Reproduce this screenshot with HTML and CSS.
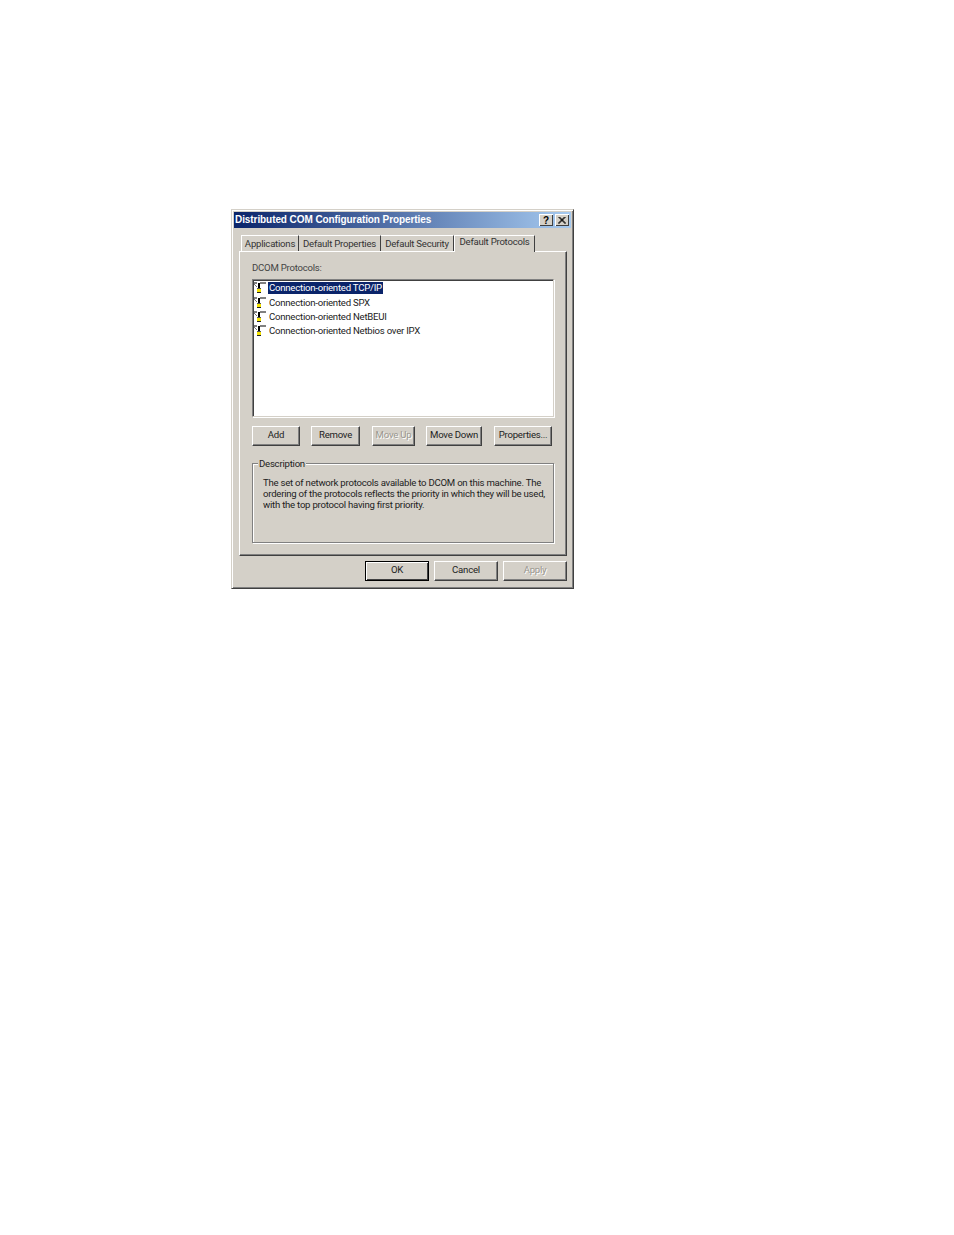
FILE: index.html
```html
<!DOCTYPE html>
<html lang="en">
<head>
    <meta charset="UTF-8">
    <title>Distributed COM Configuration Properties</title>
    <link rel="stylesheet" href="styles.css">
</head>
<body>
    <svg class="defs" width="0" height="0">
        <symbol id="proto" viewBox="0 0 14 12">
            <path d="M1 1h3M7 1h6" stroke="#000" fill="none"/>
            <path d="M1 2l3 3" stroke="#777" fill="none"/>
            <rect x="5" y="1" width="2" height="5" fill="#000"/>
            <rect x="4" y="6" width="4" height="1" fill="#555"/>
            <rect x="4" y="7" width="4" height="3" fill="#f5e400"/>
            <rect x="4" y="10" width="4" height="1" fill="#222"/>
        </symbol>
    </svg>
    <div class="dialog">
        <div class="titlebar">
            <span class="title">Distributed COM Configuration Properties</span>
            <span class="caption-btn help">?</span>
            <span class="caption-btn close">
                <svg width="8" height="7" viewBox="0 0 8 7"><path d="M0.5 0l7 7M7.5 0l-7 7M1.5 0l6 6M6.5 0l-6 6" stroke="#000" fill="none"/></svg>
            </span>
        </div>
        <div class="tabs">
            <div class="tab tab-apps">Applications</div>
            <div class="tab tab-props">Default Properties</div>
            <div class="tab tab-sec">Default Security</div>
            <div class="tab tab-proto active">Default Protocols</div>
        </div>
        <div class="panel">
            <div class="list-label">DCOM Protocols:</div>
            <div class="list">
                <div class="row"><svg class="icon"><use href="#proto"/></svg><span class="item selected">Connection-oriented TCP/IP</span></div>
                <div class="row"><svg class="icon"><use href="#proto"/></svg><span class="item">Connection-oriented SPX</span></div>
                <div class="row"><svg class="icon"><use href="#proto"/></svg><span class="item">Connection-oriented NetBEUI</span></div>
                <div class="row"><svg class="icon"><use href="#proto"/></svg><span class="item">Connection-oriented Netbios over IPX</span></div>
            </div>
            <div class="list-buttons">
                <button class="btn btn-add">Add</button>
                <button class="btn btn-remove">Remove</button>
                <button class="btn btn-up" disabled>Move Up</button>
                <button class="btn btn-down">Move Down</button>
                <button class="btn btn-prop">Properties...</button>
            </div>
            <div class="group">
                <span class="group-label">Description</span>
                <p class="group-text">The set of network protocols available to DCOM on this machine. The ordering of the protocols reflects the priority in which they will be used, with the top protocol having first priority.</p>
            </div>
        </div>
        <div class="footer">
            <button class="btn btn-main btn-default">OK</button>
            <button class="btn btn-main">Cancel</button>
            <button class="btn btn-main" disabled>Apply</button>
        </div>
    </div>
</body>
</html>
```

FILE: styles.css
```css
/* Page */
body {
    margin: 0;
    padding: 209px 0 0 231px;
    background-color: #fff;
    font-family: Roboto, "Liberation Sans", Arial, sans-serif;
    font-size: 9.6px;
    letter-spacing: -0.24px;
    color: #222;
}
.defs {
    position: absolute;
}

/* Dialog frame */
.dialog {
    box-sizing: border-box;
    width: 343px;
    height: 380px;
    padding: 2px;
    background-color: #d4d0c8;
    border: 1px solid;
    border-color: #d4d0c8 #404040 #404040 #d4d0c8;
    box-shadow: inset 1px 1px 0 #fff, inset -1px -1px 0 #808080;
}
.titlebar {
    display: flex;
    align-items: center;
    height: 16px;
    padding: 0 2px 0 1px;
    background: linear-gradient(to right, #0a246a, #a6caf0);
}
.title {
    flex: 1;
    padding-bottom: 2px;
    color: #fff;
    font-family: "Liberation Sans", Arial, sans-serif;
    font-weight: bold;
    font-size: 10px;
    letter-spacing: -0.08px;
}
.caption-btn {
    display: flex;
    align-items: center;
    justify-content: center;
    box-sizing: border-box;
    width: 14px;
    height: 12px;
    background-color: #d4d0c8;
    box-shadow: inset 1px 1px 0 #fff, inset -1px -1px 0 #404040;
    color: #000;
    font-family: "Liberation Sans", Arial, sans-serif;
    font-weight: bold;
    font-size: 10px;
}
.close {
    margin-left: 2px;
}

/* Tabs */
.tabs {
    display: flex;
    align-items: flex-end;
    height: 24px;
    margin-top: -1px;
    padding-left: 7px;
}
.tab {
    box-sizing: border-box;
    height: 16px;
    line-height: 16px;
    text-align: center;
    white-space: nowrap;
    color: #333;
    border-right: 1px solid #404040;
}
.tab-apps { width: 58px; border-top: 1px solid #fff; border-left: 1px solid #fff; }
.tab-props { width: 82px; border-top: 1px solid #fff; }
.tab-sec { width: 73px; border-top: 1px solid #fff; }
.tab-proto { width: 81px; }
.tab.active {
    height: 17px;
    line-height: 12px;
    background-color: #d4d0c8;
    border-top: 1px solid #fff;
    border-left: 1px solid #fff;
    position: relative;
    top: 1px;
}

/* Tab panel */
.panel {
    box-sizing: border-box;
    width: 328px;
    height: 305px;
    margin-left: 5px;
    padding: 10px 12px 0 12px;
    border: 1px solid;
    border-color: #fff #404040 #404040 #fff;
    box-shadow: inset -1px -1px 0 #808080;
}
.list-label {
    height: 17px;
    line-height: 12px;
    color: #444;
}
.list {
    box-sizing: border-box;
    width: 302px;
    height: 138px;
    padding: 1.1px 0 0 0;
    background-color: #fff;
    border: 1px solid;
    border-color: #808080 #d4d0c8 #d4d0c8 #808080;
    box-shadow: inset 1px 1px 0 #404040, 1px 1px 0 #fff;
}
.row {
    display: flex;
    align-items: center;
    height: 14.4px;
}
.icon {
    width: 14px;
    height: 12px;
    margin-right: 1px;
    flex: none;
}
.item {
    padding: 0 1px;
    line-height: 12px;
}
.item.selected {
    background-color: #0a246a;
    color: #fff;
}

/* Buttons */
.btn {
    box-sizing: border-box;
    height: 20px;
    padding: 0 0 3px;
    background-color: #d4d0c8;
    border: 1px solid;
    border-color: #fff #404040 #404040 #fff;
    box-shadow: inset -1px -1px 0 #808080;
    font-family: inherit;
    font-size: 9.6px;
    letter-spacing: -0.24px;
    white-space: nowrap;
    color: #222;
}
.btn:disabled {
    color: #9a978f;
    text-shadow: 1px 1px 0 #fff;
}
.list-buttons {
    display: flex;
    margin-top: 9px;
}
.btn-add { width: 48px; }
.btn-remove { width: 49px; margin-left: 11px; }
.btn-up { width: 43px; margin-left: 12px; }
.btn-down { width: 56px; margin-left: 11px; }
.btn-prop { width: 58px; margin-left: 12px; }

/* Description group */
.group {
    box-sizing: border-box;
    position: relative;
    width: 302px;
    height: 80px;
    margin-top: 17px;
    padding: 13px 5px 0 10px;
    border: 1px solid #808080;
    box-shadow: 1px 1px 0 #fff, inset 1px 1px 0 #fff;
}
.group-label {
    position: absolute;
    top: -6px;
    left: 5px;
    padding: 0 1px;
    line-height: 12px;
    background-color: #d4d0c8;
}
.group-text {
    margin: 0;
    line-height: 11px;
}

/* Footer */
.footer {
    display: flex;
    justify-content: flex-end;
    gap: 5px;
    margin-top: 5px;
    padding-right: 4px;
}
.btn-main {
    width: 64px;
}
.btn-default {
    border: 1px solid #000;
    box-shadow: inset 1px 1px 0 #fff, inset -1px -1px 0 #404040;
}
```
